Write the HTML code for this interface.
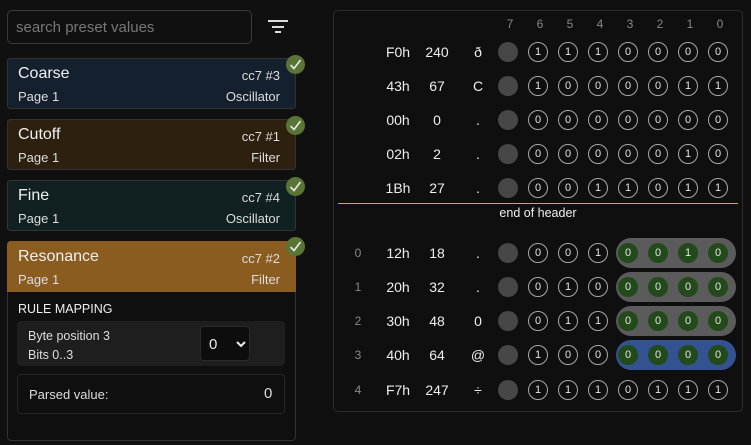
<!DOCTYPE html>
<html><head><meta charset="utf-8"><style>
*{box-sizing:border-box;margin:0;padding:0}
body{width:751px;height:445px;background:#101010;font-family:"Liberation Sans",sans-serif;color:#e8e8e8;position:relative;overflow:hidden}
.search{position:absolute;left:7px;top:10px;width:245px;height:34px;border:1px solid #3a3a3a;border-radius:5px;color:#777;font-size:15px;padding:8px 8px}
.card{position:absolute;left:7px;width:289px;height:51px;border:1px solid #333;border-radius:3px;padding:0 10px}
.card .t{position:absolute;left:10px;top:6px;font-size:16px;color:#f0f0f0}
.card .cc{position:absolute;right:15px;top:9px;font-size:13px;color:#ddd}
.card .p{position:absolute;left:10px;top:30px;font-size:13px;color:#ddd}
.card .k{position:absolute;right:15px;top:30px;font-size:13px;color:#ddd}
.chk{position:absolute;width:19px;height:19px;border-radius:50%;background:#5a7436;left:286px}
.chk svg{position:absolute;left:3px;top:3px}
.panel{position:absolute;left:333px;top:10px;width:410px;height:402px;border:1px solid #2c2c2c;border-radius:5px;background:#0f0f0f}
.row{position:absolute;left:343px;height:30px;display:flex;align-items:center;font-size:14px;color:#eee}
.row>span{display:inline-block;text-align:center}
.ix{width:30px;color:#888;font-size:12px}
.hx{width:36px;margin-left:7px}
.dc{width:36px;margin-left:3px}
.ch{width:30px;margin-left:8px}
.g{width:30px;height:20px;position:relative}
.g:after{content:"";position:absolute;left:5px;top:0;width:20px;height:20px;border-radius:50%;background:#474747}
.b{width:30px;height:20px;position:relative;z-index:1}
.b i{position:absolute;left:5px;top:0;width:20px;height:20px;border-radius:50%;border:1px solid #a8a8a8;font-style:normal;font-size:11px;line-height:18px;text-align:center;color:#e4e4e4}
.b.n i{border:none;background:#234a1b;line-height:20px}
.pill{position:absolute;left:273px;top:0;width:120px;height:30px;border-radius:15px;background:#5b5b5b}
.pill.blue{background:#33528f}
.hd{position:absolute;top:17px;font-size:12px;color:#888;width:30px;text-align:center}
</style></head><body>
<div class="search">search preset values</div>
<svg style="position:absolute;left:268px;top:19px" width="22" height="16"><rect x="0" y="1" width="20" height="2" fill="#ddd"/><rect x="4" y="7" width="12" height="2" fill="#ddd"/><rect x="7" y="12" width="6" height="2" fill="#ddd"/></svg>

<div class="card" style="top:58px;background:#15202e"><span class="t">Coarse</span><span class="cc">cc7 #3</span><span class="p">Page 1</span><span class="k">Oscillator</span></div>
<div class="card" style="top:119px;background:#2d200f"><span class="t">Cutoff</span><span class="cc">cc7 #1</span><span class="p">Page 1</span><span class="k">Filter</span></div>
<div class="card" style="top:180px;background:#112020"><span class="t">Fine</span><span class="cc">cc7 #4</span><span class="p">Page 1</span><span class="k">Oscillator</span></div>
<div style="position:absolute;left:7px;top:241px;width:289px;height:200px;border:1px solid #333;border-radius:4px;background:#0f0f0f"></div>
<div class="card" style="top:241px;background:#8a5c20;border-color:#8a5c20;border-radius:4px 4px 0 0"><span class="t">Resonance</span><span class="cc">cc7 #2</span><span class="p">Page 1</span><span class="k">Filter</span></div>
<div style="position:absolute;left:18px;top:302px;font-size:12.5px;color:#eee">RULE MAPPING</div>
<div style="position:absolute;left:17px;top:321px;width:268px;height:45px;background:#1e1e1e;border-radius:4px"></div>
<div style="position:absolute;left:28px;top:327px;font-size:12.5px;color:#ddd;line-height:19px">Byte position 3<br>Bits 0..3</div>
<div style="position:absolute;left:200px;top:326px;width:50px;height:35px;background:#0d0d0d;border:1px solid #2a2a2a;border-radius:4px;font-size:15px;padding:9px 0 0 8px">0<svg style="position:absolute;left:35px;top:14px" width="10" height="7"><path d="M1 1 L5 5 L9 1" stroke="#eee" stroke-width="2" fill="none"/></svg></div>
<div style="position:absolute;left:17px;top:374px;width:268px;height:40px;border:1px solid #262626;border-radius:4px"></div>
<div style="position:absolute;left:29px;top:387px;font-size:13px;color:#ddd">Parsed value:</div>
<div style="position:absolute;left:264px;top:385px;font-size:15px;color:#ddd">0</div>

<div class="chk" style="top:55px"><svg width="13" height="13"><path d="M1.5 7 L5 10.5 L11.5 2" stroke="#e8e8e8" stroke-width="1.6" fill="none"/></svg></div>
<div class="chk" style="top:116px"><svg width="13" height="13"><path d="M1.5 7 L5 10.5 L11.5 2" stroke="#e8e8e8" stroke-width="1.6" fill="none"/></svg></div>
<div class="chk" style="top:177px"><svg width="13" height="13"><path d="M1.5 7 L5 10.5 L11.5 2" stroke="#e8e8e8" stroke-width="1.6" fill="none"/></svg></div>
<div class="chk" style="top:237px"><svg width="13" height="13"><path d="M1.5 7 L5 10.5 L11.5 2" stroke="#e8e8e8" stroke-width="1.6" fill="none"/></svg></div>

<div class="panel"></div>
<span class="hd" style="left:495px">7</span><span class="hd" style="left:525px">6</span><span class="hd" style="left:555px">5</span><span class="hd" style="left:585px">4</span><span class="hd" style="left:615px">3</span><span class="hd" style="left:645px">2</span><span class="hd" style="left:675px">1</span><span class="hd" style="left:705px">0</span>

<div class="row" style="top:37px"><span class="ix"></span><span class="hx">F0h</span><span class="dc">240</span><span class="ch">ð</span><span class="g"></span><span class="b"><i>1</i></span><span class="b"><i>1</i></span><span class="b"><i>1</i></span><span class="b"><i>0</i></span><span class="b"><i>0</i></span><span class="b"><i>0</i></span><span class="b"><i>0</i></span></div>
<div class="row" style="top:71px"><span class="ix"></span><span class="hx">43h</span><span class="dc">67</span><span class="ch">C</span><span class="g"></span><span class="b"><i>1</i></span><span class="b"><i>0</i></span><span class="b"><i>0</i></span><span class="b"><i>0</i></span><span class="b"><i>0</i></span><span class="b"><i>1</i></span><span class="b"><i>1</i></span></div>
<div class="row" style="top:105px"><span class="ix"></span><span class="hx">00h</span><span class="dc">0</span><span class="ch">.</span><span class="g"></span><span class="b"><i>0</i></span><span class="b"><i>0</i></span><span class="b"><i>0</i></span><span class="b"><i>0</i></span><span class="b"><i>0</i></span><span class="b"><i>0</i></span><span class="b"><i>0</i></span></div>
<div class="row" style="top:139px"><span class="ix"></span><span class="hx">02h</span><span class="dc">2</span><span class="ch">.</span><span class="g"></span><span class="b"><i>0</i></span><span class="b"><i>0</i></span><span class="b"><i>0</i></span><span class="b"><i>0</i></span><span class="b"><i>0</i></span><span class="b"><i>1</i></span><span class="b"><i>0</i></span></div>
<div class="row" style="top:173px"><span class="ix"></span><span class="hx">1Bh</span><span class="dc">27</span><span class="ch">.</span><span class="g"></span><span class="b"><i>0</i></span><span class="b"><i>0</i></span><span class="b"><i>1</i></span><span class="b"><i>1</i></span><span class="b"><i>0</i></span><span class="b"><i>1</i></span><span class="b"><i>1</i></span></div>
<div style="position:absolute;left:338px;top:203px;width:400px;height:1px;background:#d0aa45"></div>
<div style="position:absolute;left:338px;top:206px;width:400px;text-align:center;font-size:12.5px;color:#eee">end of header</div>

<div class="row" style="top:238px"><span class="pill"></span><span class="ix">0</span><span class="hx">12h</span><span class="dc">18</span><span class="ch">.</span><span class="g"></span><span class="b"><i>0</i></span><span class="b"><i>0</i></span><span class="b"><i>1</i></span><span class="b n"><i>0</i></span><span class="b n"><i>0</i></span><span class="b n"><i>1</i></span><span class="b n"><i>0</i></span></div>
<div class="row" style="top:272px"><span class="pill"></span><span class="ix">1</span><span class="hx">20h</span><span class="dc">32</span><span class="ch">.</span><span class="g"></span><span class="b"><i>0</i></span><span class="b"><i>1</i></span><span class="b"><i>0</i></span><span class="b n"><i>0</i></span><span class="b n"><i>0</i></span><span class="b n"><i>0</i></span><span class="b n"><i>0</i></span></div>
<div class="row" style="top:306px"><span class="pill"></span><span class="ix">2</span><span class="hx">30h</span><span class="dc">48</span><span class="ch">0</span><span class="g"></span><span class="b"><i>0</i></span><span class="b"><i>1</i></span><span class="b"><i>1</i></span><span class="b n"><i>0</i></span><span class="b n"><i>0</i></span><span class="b n"><i>0</i></span><span class="b n"><i>0</i></span></div>
<div class="row" style="top:340px"><span class="pill blue"></span><span class="ix">3</span><span class="hx">40h</span><span class="dc">64</span><span class="ch">@</span><span class="g"></span><span class="b"><i>1</i></span><span class="b"><i>0</i></span><span class="b"><i>0</i></span><span class="b n"><i>0</i></span><span class="b n"><i>0</i></span><span class="b n"><i>0</i></span><span class="b n"><i>0</i></span></div>
<div class="row" style="top:375px"><span class="ix">4</span><span class="hx">F7h</span><span class="dc">247</span><span class="ch">÷</span><span class="g"></span><span class="b"><i>1</i></span><span class="b"><i>1</i></span><span class="b"><i>1</i></span><span class="b"><i>0</i></span><span class="b"><i>1</i></span><span class="b"><i>1</i></span><span class="b"><i>1</i></span></div>
</body></html>
